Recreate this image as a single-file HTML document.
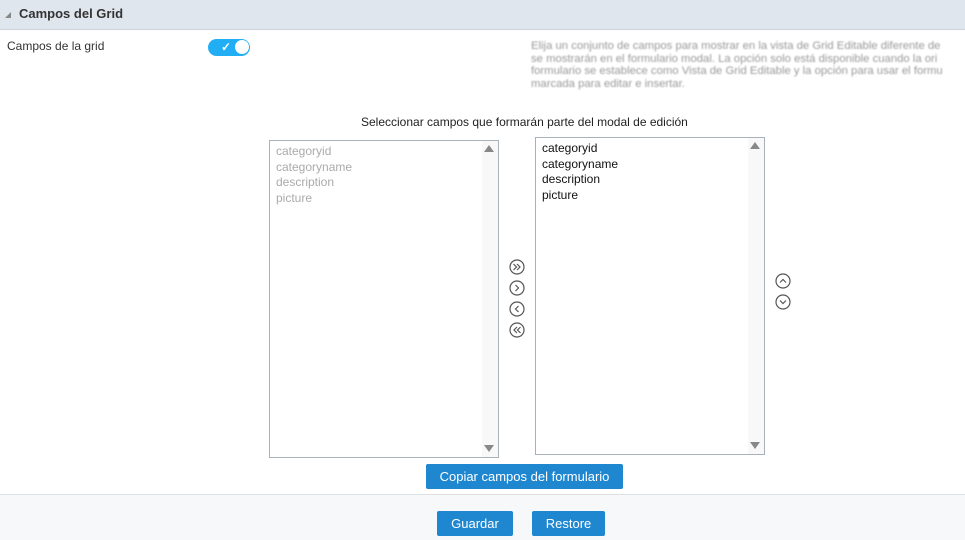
<!DOCTYPE html>
<html><head><meta charset="utf-8"><style>
*{margin:0;padding:0;box-sizing:border-box}
body{width:965px;height:540px;position:relative;background:#fff;font-family:"Liberation Sans",sans-serif;overflow:hidden}
.a{position:absolute}
.hdr{left:0;top:0;width:965px;height:30px;background:#e0e6ed;border-bottom:1px solid #ccd4dd}
.box{position:absolute;border:1px solid #a9b1bb;background:#fff;font-size:12px;line-height:15.5px;padding:3px 6px}
.sb{position:absolute;right:0;top:0;bottom:0;width:16px;background:#f8f8f8}
.up{position:absolute;right:4px;top:4px;width:0;height:0;border-left:5px solid transparent;border-right:5px solid transparent;border-bottom:7px solid #888}
.dn{position:absolute;right:4px;bottom:5px;width:0;height:0;border-left:5px solid transparent;border-right:5px solid transparent;border-top:7px solid #888}
.btn{position:absolute;background:#1f86d0;color:#fff;font-size:13px;text-align:center;border-radius:2px}
</style></head><body>
<div class="a hdr"></div>
<div class="a" style="left:5px;top:12px;width:0;height:0;border-left:6px solid transparent;border-bottom:6px solid #888"></div>
<div class="a" style="left:19px;top:6px;font-size:13px;font-weight:bold;color:#333">Campos del Grid</div>
<div class="a" style="left:7px;top:39px;font-size:12px;color:#333">Campos de la grid</div>
<div class="a" style="left:208px;top:39px;width:42px;height:17px;border-radius:9px;background:#21aef5"></div>
<div class="a" style="left:221px;top:40px;color:#fff;font-size:12px;font-weight:bold">✓</div>
<div class="a" style="left:235px;top:40px;width:14px;height:14px;border-radius:50%;background:#fff"></div>
<div class="a" style="left:531px;top:40px;width:460px;font-size:11.3px;line-height:12.5px;color:#999;filter:blur(0.8px);white-space:nowrap">Elija un conjunto de campos para mostrar en la vista de Grid Editable diferente de<br>se mostrarán en el formulario modal. La opción solo está disponible cuando la ori<br>formulario se establece como Vista de Grid Editable y la opción para usar el formu<br>marcada para editar e insertar.</div>
<div class="a" style="left:361px;top:115px;font-size:12px;color:#222">Seleccionar campos que formarán parte del modal de edición</div>
<div class="box" style="left:269px;top:140px;width:230px;height:318px;color:#aaa"><div class="sb"><div class="up"></div><div class="dn"></div></div>categoryid<br>categoryname<br>description<br>picture</div>
<div class="box" style="left:535px;top:137px;width:230px;height:318px;color:#111"><div class="sb"><div class="up"></div><div class="dn"></div></div>categoryid<br>categoryname<br>description<br>picture</div>
<svg class="a" style="left:508px;top:258px" width="18" height="82" viewBox="0 0 18 82" fill="none" stroke="#555" stroke-width="1.2">
<circle cx="9" cy="9" r="7"/><path d="M5.5 6l3 3-3 3M9 6l3 3-3 3"/>
<circle cx="9" cy="30" r="7"/><path d="M7.5 27l3 3-3 3"/>
<circle cx="9" cy="51" r="7"/><path d="M10.5 48l-3 3 3 3"/>
<circle cx="9" cy="72" r="7"/><path d="M9 69l-3 3 3 3M12.5 69l-3 3 3 3"/>
</svg>
<svg class="a" style="left:774px;top:272px" width="18" height="40" viewBox="0 0 18 40" fill="none" stroke="#555" stroke-width="1.2">
<circle cx="9" cy="9" r="7"/><path d="M6 10.5l3-3 3 3"/>
<circle cx="9" cy="30" r="7"/><path d="M6 28.5l3 3 3-3"/>
</svg>
<div class="btn" style="left:426px;top:464px;width:197px;height:25px;line-height:25px">Copiar campos del formulario</div>
<div class="a" style="left:0;top:494px;width:965px;height:46px;background:#f7f8fa;border-top:1px solid #dde1e6"></div>
<div class="btn" style="left:437px;top:511px;width:76px;height:25px;line-height:25px">Guardar</div>
<div class="btn" style="left:532px;top:511px;width:73px;height:25px;line-height:25px">Restore</div>
</body></html>
